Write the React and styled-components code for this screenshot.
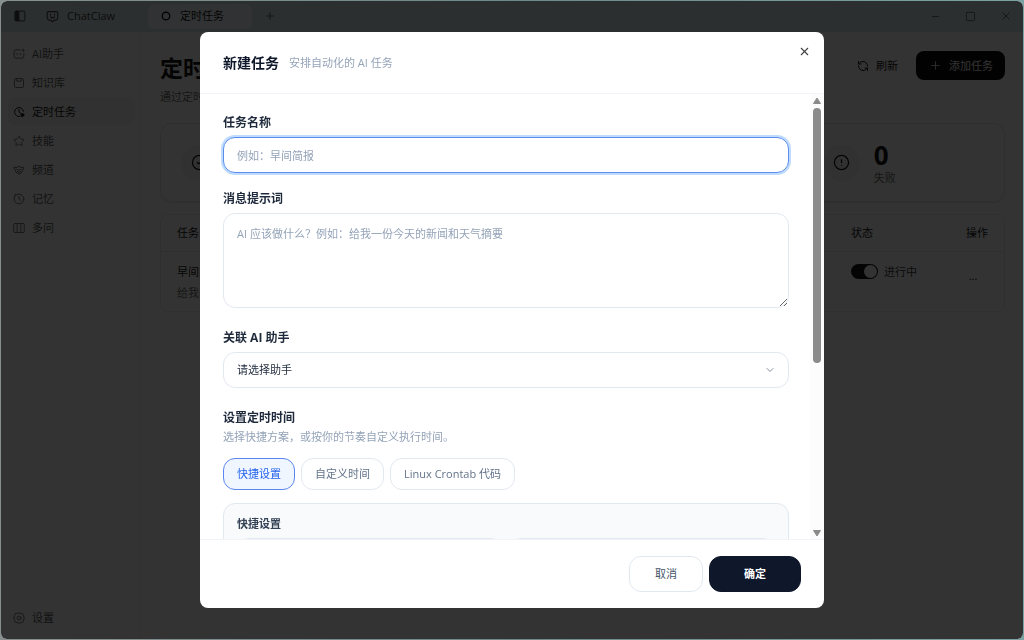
import React, { useState } from 'react'
import styled, { createGlobalStyle, css } from 'styled-components'
import { ChevronDown, CircleAlert, CircleCheck, CirclePause, List, Minus, Plus, RefreshCcw, Square, Star, X } from 'lucide-react'

const GlobalStyle = createGlobalStyle`
	* {
		box-sizing: border-box;
	}
	body {
		margin: 0;
		background: linear-gradient(90deg, #87908f, #6d8a8a 50%, #7ba3a3);
		font-family: 'Open Sans', 'Noto Sans CJK SC', sans-serif;
		font-size: 11px;
		line-height: 16px;
	}
	button, input, textarea, select {
		font: inherit;
		color: inherit;
		margin: 0;
	}
	button {
		cursor: pointer;
	}
	h1, h2, p {
		margin: 0;
	}
`

const Desktop = styled.div`
	display: flex;
	min-height: 100vh;
	padding: 1px;
`

const AppWindow = styled.div`
	flex: 1;
	display: flex;
	flex-direction: column;
	border-radius: 6px;
	overflow: hidden;
	background: #fff;
	color: #171717;
`

const TitleBar = styled.header`
	display: flex;
	align-items: center;
	height: 31px;
	padding: 0 0 1px 12px;
	background: #dceaf0;
`

const BarButton = styled.button`
	display: flex;
	align-items: center;
	justify-content: center;
	width: ${({ $wide }) => ($wide ? 35 : 14)}px;
	height: 24px;
	padding: 0;
	border: 0;
	background: none;
	color: #404040;
`

const Tab = styled.button`
	display: flex;
	align-items: center;
	gap: 8px;
	height: 25px;
	padding: 0 ${({ $active }) => ($active ? 28 : 32)}px 0 12px;
	margin-left: ${({ $active }) => ($active ? 1 : 7)}px;
	border: 0;
	border-radius: 6px;
	background: ${({ $active }) => ($active ? '#f6fbfd' : 'none')};
	color: ${({ $active }) => ($active ? '#171717' : '#404040')};
`

const Spacer = styled.div`
	flex: 1;
`

const Columns = styled.div`
	flex: 1;
	display: flex;
`

const Sidebar = styled.nav`
	display: flex;
	flex-direction: column;
	gap: 2px;
	width: 140px;
	padding: 8px 6px 8px 7px;
	border-right: 1px solid #f0f0f0;
`

const NavLink = styled.a`
	display: flex;
	align-items: center;
	gap: 7px;
	height: 27px;
	padding: 0 5px;
	border-radius: 6px;
	text-decoration: none;
	color: ${({ $active }) => ($active ? '#171717' : '#5a5a5a')};
	background: ${({ $active }) => ($active ? '#f3f3f3' : 'none')};
	svg {
		color: ${({ $active }) => ($active ? '#171717' : '#737373')};
	}
`

const Main = styled.main`
	flex: 1;
	padding: 19px 18px 0 19px;
`

const PageHead = styled.div`
	display: flex;
	justify-content: space-between;
	align-items: flex-start;
`

const PageTitle = styled.h1`
	font-size: 23px;
	line-height: 35px;
	margin-bottom: 3px;
`

const Muted = styled.p`
	color: #737373;
`

const Actions = styled.div`
	display: flex;
	gap: 6px;
`

const ActionButton = styled.button`
	display: flex;
	align-items: center;
	gap: 7px;
	height: 29px;
	padding: 0 12px 0 13px;
	border: 0;
	border-radius: 8px;
	background: ${({ $primary }) => ($primary ? '#0a0a0a' : '#fff')};
	color: ${({ $primary }) => ($primary ? '#fafafa' : '#171717')};
`

const Stats = styled.div`
	display: grid;
	grid-template-columns: repeat(4, 1fr);
	gap: 12px;
	margin: 18px 0 12px;
`

const StatCard = styled.div`
	display: flex;
	align-items: center;
	gap: 14px;
	height: 79px;
	padding: 0 20px;
	border: 1px solid #e5e5e5;
	border-radius: 12px;
	box-shadow: 0 1px 2px #e5e5e5;
`

const StatIcon = styled.div`
	display: flex;
	align-items: center;
	justify-content: center;
	width: 36px;
	height: 36px;
	border-radius: 50%;
	background: #f5f5f7;
`

const StatValue = styled.div`
	font-size: 26px;
	font-weight: 700;
	line-height: 30px;
`

const TableCard = styled.div`
	border: 1px solid #ececec;
	border-radius: 8px;
`

const Table = styled.table`
	width: 100%;
	border-collapse: collapse;
	th, td {
		padding: 0 16px;
		text-align: left;
		vertical-align: top;
	}
	th {
		height: 36px;
		font-weight: 400;
		vertical-align: middle;
		border-bottom: 1px solid #ececec;
	}
	td {
		height: 60px;
		padding-top: 12px;
	}
	th:nth-child(2), td:nth-child(2) {
		width: 107px;
		padding-right: 0;
	}
	th:last-child, td:last-child {
		width: 62px;
		text-align: right;
	}
	p {
		margin-top: 5px;
	}
`

const Status = styled.label`
	display: flex;
	align-items: center;
	gap: 6px;
	color: #404040;
`

const Toggle = styled.input`
	appearance: none;
	display: flex;
	width: 27px;
	height: 15px;
	padding: 1px;
	border-radius: 8px;
	background: #171717;
	&::before {
		content: '';
		width: 13px;
		height: 13px;
		margin-left: auto;
		border-radius: 50%;
		background: #fff;
	}
`

const MoreButton = styled.button`
	padding: 4px 0 0;
	width: 30px;
	border: 0;
	background: none;
`

const Overlay = styled.div`
	position: fixed;
	inset: 1px;
	display: flex;
	align-items: center;
	justify-content: center;
	border-radius: 6px;
	background: rgba(0, 0, 0, 0.8);
`

const Dialog = styled.section`
	position: relative;
	display: flex;
	flex-direction: column;
	width: 624px;
	max-width: 94vw;
	height: 90vh;
	border-radius: 8px;
	overflow: hidden;
	background: #fff;
	color: #1e293b;
`

const DialogHead = styled.header`
	display: flex;
	align-items: center;
	gap: 10px;
	height: 62px;
	padding: 1px 23px 0;
	border-bottom: 1px solid #f1f5f9;
	h2 {
		font-size: 14px;
		line-height: 20px;
		color: #0f172a;
	}
	p {
		color: #94a3b8;
	}
`

const CloseButton = styled.button`
	position: absolute;
	top: 13px;
	right: 13px;
	display: flex;
	padding: 0;
	border: 0;
	background: none;
	color: #404040;
`

const DialogBody = styled.div`
	flex: 1;
	min-height: 0;
	display: flex;
`

const Form = styled.form`
	flex: 1;
	display: flex;
	flex-direction: column;
	gap: 22px;
	padding: 21px 21px 20px 23px;
	overflow-y: auto;
	scrollbar-width: none;
`

const FieldGroup = styled.div`
	display: flex;
	flex-direction: column;
	gap: 18px;
`

const Field = styled.div`
	display: flex;
	flex-direction: column;
	gap: 6px;
`

const Label = styled.label`
	font-size: 12px;
	font-weight: 700;
	line-height: 16px;
	color: #1e293b;
`

const control = css`
	display: block;
	width: 100%;
	border: 1px solid #e2e8f0;
	border-radius: 12px;
	background: #fff;
	outline: 0;
	&::placeholder {
		color: #94a3b8;
		opacity: 1;
	}
`

const TextInput = styled.input`
	${control}
	height: 36px;
	padding: 0 13px;
	border-color: #5b8def;
	box-shadow: 0 0 0 2px #bfdbfe;
`

const TextArea = styled.textarea`
	${control}
	height: 95px;
	padding: 12px 13px;
	resize: vertical;
`

const SelectWrap = styled.div`
	display: grid;
	align-items: center;
	> * {
		grid-area: 1 / 1;
	}
	svg {
		justify-self: end;
		margin-right: 13px;
		color: #8391a7;
		pointer-events: none;
	}
`

const Select = styled.select`
	${control}
	appearance: none;
	height: 36px;
	padding: 0 13px;
`

const Schedule = styled.div`
	display: flex;
	flex-direction: column;
	gap: 13px;
`

const ScheduleHead = styled.div`
	display: flex;
	flex-direction: column;
	gap: 3px;
	h2 {
		font-size: 12px;
		line-height: 16px;
	}
	p {
		color: #94a3b8;
	}
`

const Modes = styled.div`
	display: flex;
	gap: 6px;
`

const ModeButton = styled.button`
	height: 32px;
	padding: 0 13px;
	border: 1px solid ${({ $active }) => ($active ? '#5b85f0' : '#e2e8f0')};
	border-radius: 12px;
	background: ${({ $active }) => ($active ? '#eff6ff' : '#fff')};
	color: ${({ $active }) => ($active ? '#2563eb' : '#64748b')};
`

const Panel = styled.div`
	display: flex;
	flex-direction: column;
	gap: 6px;
	padding: 12px 13px;
	border: 1px solid #e2e8f0;
	border-radius: 12px;
	background: #f8fafc;
	h2 {
		font-size: 11px;
		line-height: 16px;
		color: #334155;
	}
`

const PanelGrid = styled.div`
	display: grid;
	grid-template-columns: 1fr 1fr;
	gap: 6px;
`

const ScrollRail = styled.div`
	display: flex;
	flex-direction: column;
	align-items: center;
	width: 14px;
	padding: 3px 0 2px;
	gap: 4px;
	background: #fcfcfc;
`

const ScrollTrack = styled.div`
	flex: 1;
	width: 8px;
`

const ScrollThumb = styled.div`
	height: 61%;
	border-radius: 4px;
	background: #8b8b8b;
`

const DialogFoot = styled.footer`
	display: flex;
	justify-content: flex-end;
	gap: 6px;
	padding: 16px 23px;
	border-top: 1px solid #f1f5f9;
`

const FootButton = styled.button`
	height: 36px;
	padding: 0 ${({ $primary }) => ($primary ? 34 : 25)}px;
	border: 1px solid ${({ $primary }) => ($primary ? '#0f172a' : '#e2e8f0')};
	border-radius: 12px;
	background: ${({ $primary }) => ($primary ? '#0f172a' : '#fff')};
	color: ${({ $primary }) => ($primary ? '#fff' : '#475569')};
	font-weight: ${({ $primary }) => ($primary ? 700 : 400)};
`

const Glyph = ({ size = 12, children }) => (
	<svg width={size} height={size} viewBox="0 0 16 16" fill="none" stroke="currentColor" strokeWidth="1.3" strokeLinecap="round" strokeLinejoin="round" aria-hidden="true">
		{children}
	</svg>
)

const PanelIcon = () => (
	<Glyph>
		<rect x="1.5" y="1.5" width="13" height="13" rx="1.5" />
		<path d="M2 2h4.500v12H2z" fill="currentColor" />
	</Glyph>
)

const ClawIcon = () => (
	<Glyph size={13}>
		<path d="M3 2h10a1.500 1.500 0 0 1 1.500 1.500v6a3 3 0 0 1-3 3H10L8 14.500l-2-2H4.500a3 3 0 0 1-3-3v-6A1.500 1.500 0 0 1 3 2z" />
		<path d="M5.500 5v1M10.500 5v1M5.500 8.500q2.500 2.500 5 0" />
	</Glyph>
)

const AssistantIcon = () => (
	<Glyph>
		<path d="M9.500 2.500H4A2.500 2.500 0 0 0 1.500 5v6A2.500 2.500 0 0 0 4 13.500h8a2.500 2.500 0 0 0 2.500-2.500V7.500M5.500 7.500V9M10 7.500V9M13.500 1.500v3M12 3h3" />
	</Glyph>
)

const LibraryIcon = () => (
	<Glyph>
		<rect x="2" y="2" width="12" height="12" rx="1.5" />
		<path d="M5 2v3.500h6V2" />
	</Glyph>
)

const ScheduleIcon = () => (
	<Glyph>
		<path d="M14 7a6 6 0 1 0-5 7M8 4.500V8l2 1.500" />
		<circle cx="12.500" cy="12" r="2" fill="currentColor" />
	</Glyph>
)

const ChannelIcon = () => (
	<Glyph>
		<path d="M1.500 4.500h4L8 3l2.500 1.500h4L13 8l-1 3-4 2.500L4 11 3 8zM5 7l3 1.500L11 7M6 10l2 1 2-1" />
	</Glyph>
)

const MemoryIcon = () => (
	<Glyph>
		<circle cx="8" cy="8" r="6.500" />
		<path d="M8 4.500V8l2.500 2M2 3l1.500-1" />
	</Glyph>
)

const MultiIcon = () => (
	<Glyph>
		<rect x="1" y="2" width="14" height="12" rx="1.5" />
		<path d="M5.500 2v12M10.500 2v12" />
	</Glyph>
)

const SettingsIcon = () => (
	<Glyph>
		<path d="M5.500 2L8 1l2.500 1 2.500.5L14 5l1 3-1 3-1 2.500-2.500.5L8 15l-2.500-1-2.500-.5L2 11 1 8l1-3 1-2.500z" />
		<circle cx="8" cy="8" r="2.500" />
	</Glyph>
)

const NAV = [
	{ label: 'AI助手', icon: <AssistantIcon /> },
	{ label: '知识库', icon: <LibraryIcon /> },
	{ label: '定时任务', icon: <ScheduleIcon />, active: true },
	{ label: '技能', icon: <Star size={12} strokeWidth={1.8} /> },
	{ label: '频道', icon: <ChannelIcon /> },
	{ label: '记忆', icon: <MemoryIcon /> },
	{ label: '多问', icon: <MultiIcon /> },
]

const STATS = [
	{ label: '全部', value: 1, icon: CircleCheck },
	{ label: '进行中', value: 1, icon: List },
	{ label: '暂停', value: 0, icon: CirclePause },
	{ label: '失败', value: 0, icon: CircleAlert },
]

const MODES = ['快捷设置', '自定义时间', 'Linux Crontab 代码']

const TaskDialog = () => {
	const [mode, setMode] = useState(MODES[0])
	return (
		<Dialog role="dialog" aria-labelledby="dialog-title">
			<DialogHead>
				<h2 id="dialog-title">新建任务</h2>
				<p>安排自动化的 AI 任务</p>
				<CloseButton aria-label="关闭"><X size={13} strokeWidth={2} /></CloseButton>
			</DialogHead>
			<DialogBody>
				<Form id="task-form">
					<FieldGroup>
						<Field>
							<Label htmlFor="name">任务名称</Label>
							<TextInput id="name" placeholder="例如：早间简报" />
						</Field>
						<Field>
							<Label htmlFor="prompt">消息提示词</Label>
							<TextArea id="prompt" placeholder="AI 应该做什么？例如：给我一份今天的新闻和天气摘要" />
						</Field>
					</FieldGroup>
					<Field>
						<Label htmlFor="assistant">关联 AI 助手</Label>
						<SelectWrap>
							<Select id="assistant"><option>请选择助手</option></Select>
							<ChevronDown size={12} />
						</SelectWrap>
					</Field>
					<Schedule>
						<ScheduleHead>
							<h2>设置定时时间</h2>
							<p>选择快捷方案，或按你的节奏自定义执行时间。</p>
						</ScheduleHead>
						<Modes>
							{MODES.map(m => (
								<ModeButton key={m} type="button" $active={m === mode} onClick={() => setMode(m)}>{m}</ModeButton>
							))}
						</Modes>
						<Panel>
							<h2>{mode}</h2>
							<PanelGrid>
								<Select aria-label="频率" />
								<Select aria-label="时间" />
							</PanelGrid>
						</Panel>
					</Schedule>
				</Form>
				<ScrollRail aria-hidden="true">
					<svg width="8" height="7" viewBox="0 0 8 7"><path d="M4 1l3.500 5.500h-7z" fill="#8b8b8b" stroke="#8b8b8b" strokeLinejoin="round" /></svg>
					<ScrollTrack><ScrollThumb /></ScrollTrack>
					<svg width="8" height="7" viewBox="0 0 8 7"><path d="M4 6L.5.500h7z" fill="#8b8b8b" stroke="#8b8b8b" strokeLinejoin="round" /></svg>
				</ScrollRail>
			</DialogBody>
			<DialogFoot>
				<FootButton type="button">取消</FootButton>
				<FootButton $primary type="submit" form="task-form">确定</FootButton>
			</DialogFoot>
		</Dialog>
	)
}

const App = () => (
	<Desktop>
		<GlobalStyle />
		<AppWindow>
			<TitleBar>
				<BarButton aria-label="侧边栏"><PanelIcon /></BarButton>
				<Tab><ClawIcon />ChatClaw</Tab>
				<Tab $active>
					<Glyph><circle cx="8" cy="8" r="5" strokeWidth="1.8" /></Glyph>
					定时任务
				</Tab>
				<BarButton $wide aria-label="新标签页"><Plus size={12} strokeWidth={1.5} /></BarButton>
				<Spacer />
				<BarButton $wide aria-label="最小化"><Minus size={11} strokeWidth={1.5} /></BarButton>
				<BarButton $wide aria-label="最大化"><Square size={11} strokeWidth={1.5} /></BarButton>
				<BarButton $wide aria-label="关闭窗口"><X size={12} strokeWidth={1.5} /></BarButton>
			</TitleBar>
			<Columns>
				<Sidebar>
					{NAV.map(({ label, icon, active }) => (
						<NavLink key={label} href="#" $active={active}>{icon}{label}</NavLink>
					))}
					<Spacer />
					<NavLink href="#"><SettingsIcon />设置</NavLink>
				</Sidebar>
				<Main>
					<PageHead>
						<div>
							<PageTitle>定时任务</PageTitle>
							<Muted>通过定时任务</Muted>
						</div>
						<Actions>
							<ActionButton><RefreshCcw size={12} />刷新</ActionButton>
							<ActionButton $primary><Plus size={13} strokeWidth={1.5} />添加任务</ActionButton>
						</Actions>
					</PageHead>
					<Stats>
						{STATS.map(({ label, value, icon: Icon }) => (
							<StatCard key={label}>
								<StatIcon><Icon size={17} strokeWidth={1.8} /></StatIcon>
								<div>
									<StatValue>{value}</StatValue>
									<Muted>{label}</Muted>
								</div>
							</StatCard>
						))}
					</Stats>
					<TableCard>
						<Table>
							<thead>
								<tr><th>任务</th><th>状态</th><th>操作</th></tr>
							</thead>
							<tbody>
								<tr>
									<td>
										早间简报
										<Muted>给我一份今天的新闻和天气摘要</Muted>
									</td>
									<td>
										<Status><Toggle type="checkbox" defaultChecked />进行中</Status>
									</td>
									<td><MoreButton aria-label="更多">...</MoreButton></td>
								</tr>
							</tbody>
						</Table>
					</TableCard>
				</Main>
			</Columns>
		</AppWindow>
		<Overlay>
			<TaskDialog />
		</Overlay>
	</Desktop>
)

export default App
